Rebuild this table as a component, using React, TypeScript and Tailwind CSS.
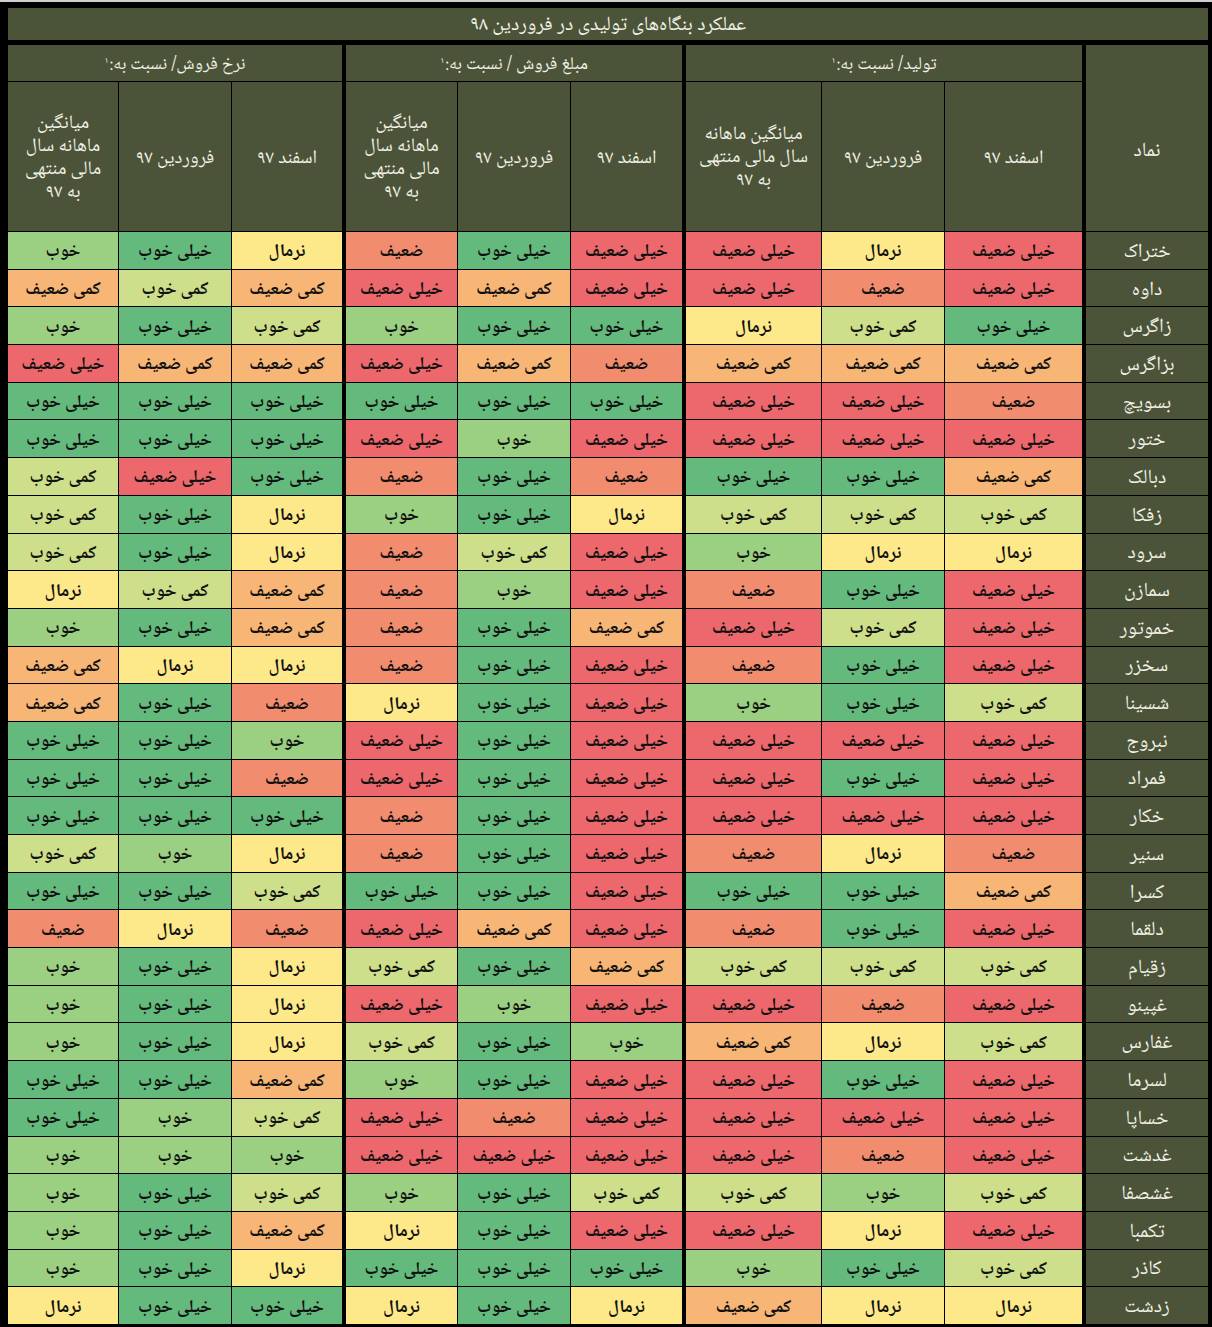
import React from 'react'

type Level = 1 | 2 | 3 | 4 | 5 | 6 | 7

const levels: Record<Level, { label: string; bg: string }> = {
  1: { label: 'خیلی ضعیف', bg: 'bg-[#ed686c]' },
  2: { label: 'ضعیف', bg: 'bg-[#f18d6e]' },
  3: { label: 'کمی ضعیف', bg: 'bg-[#f8b676]' },
  4: { label: 'نرمال', bg: 'bg-[#fde88a]' },
  5: { label: 'کمی خوب', bg: 'bg-[#cddf8a]' },
  6: { label: 'خوب', bg: 'bg-[#9bcf82]' },
  7: { label: 'خیلی خوب', bg: 'bg-[#64ba7c]' },
}

// each group: [اسفند ۹۷, فروردین ۹۷, میانگین]
const rows: [string, string, string, string][] = [
  ['ختراک', '141', '172', '476'],
  ['داوه', '121', '131', '353'],
  ['زاگرس', '754', '776', '576'],
  ['بزاگرس', '333', '231', '331'],
  ['بسویچ', '211', '777', '777'],
  ['ختور', '111', '161', '777'],
  ['دبالک', '377', '272', '715'],
  ['زفکا', '555', '476', '475'],
  ['سرود', '446', '152', '475'],
  ['سمازن', '172', '162', '354'],
  ['خموتور', '151', '372', '376'],
  ['سخزر', '172', '172', '443'],
  ['شسینا', '576', '174', '273'],
  ['نبروج', '111', '171', '677'],
  ['فمراد', '171', '171', '277'],
  ['خکار', '111', '172', '777'],
  ['سنیر', '242', '172', '465'],
  ['کسرا', '377', '177', '577'],
  ['دلقما', '172', '131', '242'],
  ['زقیام', '555', '375', '476'],
  ['غپینو', '121', '161', '476'],
  ['غفارس', '543', '675', '476'],
  ['لسرما', '171', '176', '377'],
  ['خساپا', '111', '121', '567'],
  ['غدشت', '121', '111', '666'],
  ['غشصفا', '565', '576', '576'],
  ['تکمبا', '141', '174', '376'],
  ['کاذر', '576', '777', '476'],
  ['زدشت', '443', '474', '774'],
]

const font = { fontFamily: '"Noto Naskh Arabic", "Noto Sans Arabic", "DejaVu Sans", sans-serif' }

function Group({
  title,
  width,
  cols,
  avgLabel,
  index,
}: {
  title: string
  width: string
  cols: string
  avgLabel: React.ReactNode
  index: 1 | 2 | 3
}) {
  return (
    <div className={`flex flex-col gap-px ${width}`}>
      <div className="h-[36px] bg-[#4b5438] flex items-center justify-center pt-[4px] text-[18px] text-[#f1f1e6]">
        {title}
        <sup className="text-[9px] mr-[1px]">۱</sup>
      </div>
      <div className={`grid ${cols} gap-px h-[149px]`}>
        <div className="bg-[#4b5438] flex items-center justify-center pt-[5px] text-[19px] text-[#f1f1e6]">اسفند ۹۷</div>
        <div className="bg-[#4b5438] flex items-center justify-center pt-[5px] text-[19px] text-[#f1f1e6]">فروردین ۹۷</div>
        <div className="bg-[#4b5438] flex items-center justify-center pt-[4px] text-center text-[19px] leading-[23px] text-[#f1f1e6]">
          {avgLabel}
        </div>
      </div>
      <div className={`grid ${cols} grid-rows-[repeat(29,minmax(0,1fr))] gap-px h-[1092px]`}>
        {rows.map((r) =>
          r[index].split('').map((c, i) => {
            const lv = levels[Number(c) as Level]
            return (
              <div
                key={`${r[0]}-${i}`}
                className={`${lv.bg} flex items-center justify-center pt-[5px] text-[18px] font-bold text-[#111]`}
              >
                {lv.label}
              </div>
            )
          })
        )}
      </div>
    </div>
  )
}

export default function App() {
  return (
    <div dir="rtl" style={font} className="w-[1212px] h-[1327px] bg-black border-t-2 border-[#cfcfcf] pt-[6px] pr-[4px] pl-[8px] overflow-hidden">
      <div className="h-[32px] bg-[#4b5438] flex items-center justify-center pt-[4px] text-[20px] text-[#f1f1e6]">
        عملکرد بنگاه‌های تولیدی در فروردین ۹۸
      </div>
      <div className="mt-[5px] flex gap-[4px]">
        <div className="flex flex-col gap-px w-[122px]">
          <div className="h-[186px] bg-[#4b5438] flex items-center justify-center pt-[28px] text-[20px] text-[#f1f1e6]">نماد</div>
          <div className="grid grid-rows-[repeat(29,minmax(0,1fr))] gap-px h-[1092px]">
            {rows.map((r) => (
              <div key={r[0]} className="bg-[#4b5438] flex items-center justify-center pt-[5px] text-[20px] text-[#f1f1e6]">
                {r[0]}
              </div>
            ))}
          </div>
        </div>
        <Group
          title="تولید/ نسبت به:"
          width="w-[396px]"
          cols="grid-cols-[137px_122px_135px]"
          index={1}
          avgLabel={
            <>
              میانگین ماهانه
              <br />
              سال مالی منتهی
              <br />
              به ۹۷
            </>
          }
        />
        <Group
          title="مبلغ فروش / نسبت به:"
          width="w-[336px]"
          cols="grid-cols-[111px_112px_111px]"
          index={2}
          avgLabel={
            <>
              میانگین
              <br />
              ماهانه سال
              <br />
              مالی منتهی
              <br />
              به ۹۷
            </>
          }
        />
        <Group
          title="نرخ فروش/ نسبت به:"
          width="w-[334px]"
          cols="grid-cols-[110px_112px_110px]"
          index={3}
          avgLabel={
            <>
              میانگین
              <br />
              ماهانه سال
              <br />
              مالی منتهی
              <br />
              به ۹۷
            </>
          }
        />
      </div>
    </div>
  )
}
